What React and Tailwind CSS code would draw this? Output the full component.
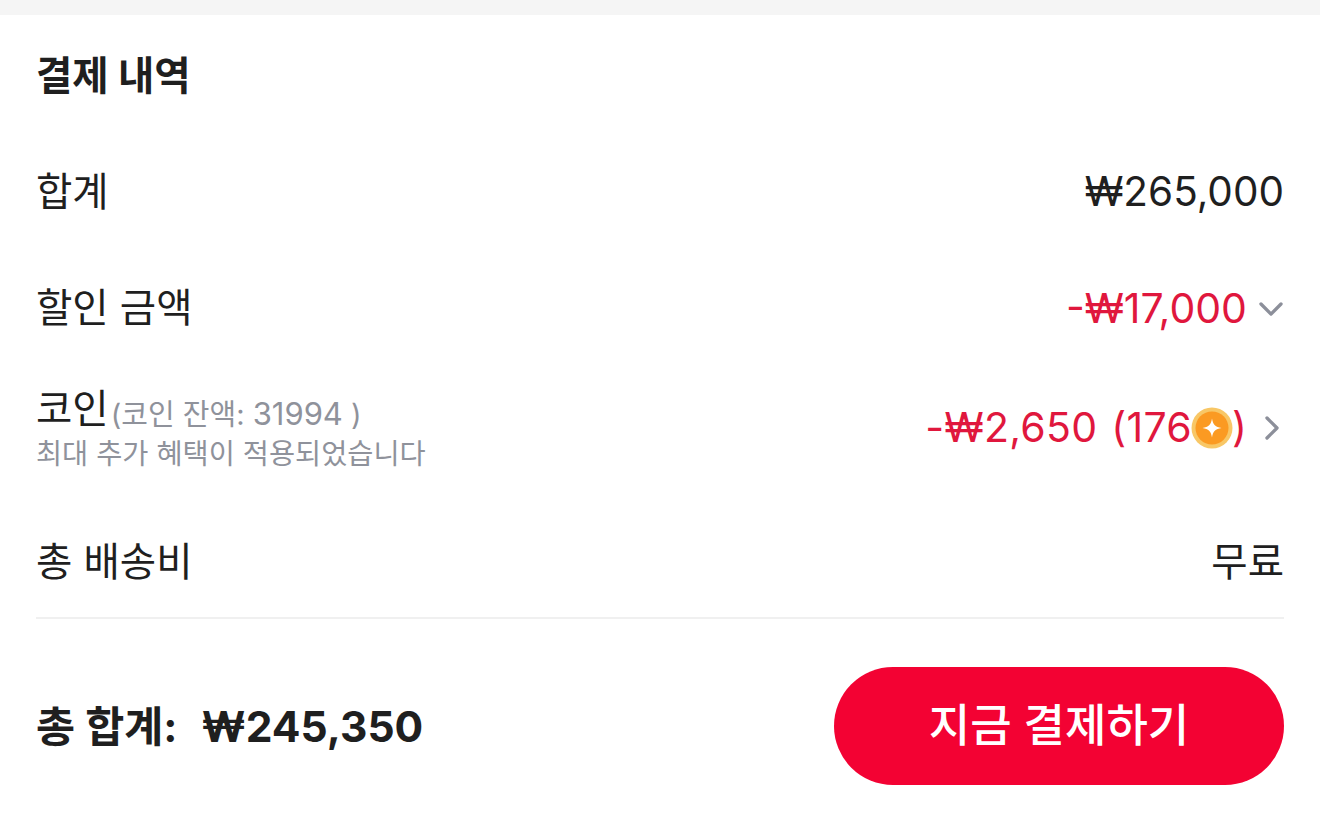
import { ChevronDown, ChevronRight } from 'lucide-react';

const font = "font-['Inter','Noto_Sans_CJK_KR',sans-serif]";

function Coin() {
  return (
    <svg className="w-[42px] h-[42px] shrink-0 -mx-[1px]" viewBox="0 0 42 42">
      <circle cx="21" cy="21" r="20.5" fill="#f8c766" />
      <circle cx="21" cy="21" r="16.5" fill="#fb9a22" />
      <path d="M21 11.5c.9 6 3.5 8.6 9.5 9.5-6 .9-8.6 3.5-9.5 9.5-.9-6-3.5-8.6-9.5-9.5 6-.9 8.6-3.5 9.5-9.5z" fill="#fff" />
    </svg>
  );
}

export default function App() {
  return (
    <div className={`w-[1320px] h-[822px] bg-white overflow-hidden text-[#1f1f1f] ${font}`}>
      <div className="h-[15px] bg-[#f5f5f5]"></div>

      <div className="px-9">
        <h2 className="h-[118px] pt-[32px] text-[39.5px] leading-[58px] font-bold">결제 내역</h2>

        <div className="h-[116px] pt-[3px] flex items-center justify-between">
          <span className="text-[39.5px]">합계</span>
          <span className="text-[40.5px]">₩265,000</span>
        </div>

        <div className="h-[116px] pt-[4px] flex items-center justify-between">
          <span className="text-[39.5px]">할인 금액</span>
          <div className="flex items-center gap-1 text-[#e0173d]">
            <span className="text-[41px]">-₩17,000</span>
            <ChevronDown className="w-10 h-10 text-[#8c8f9a] -mr-[7px]" strokeWidth={2} />
          </div>
        </div>

        <div className="h-[126px] flex items-center justify-between">
          <div className="pt-[6px]">
            <div className="flex items-end">
              <span className="text-[39.5px] leading-[44px]">코인</span>
              <span className="text-[29px] leading-[32px] text-[#8f929b] ml-[2px]">(코인 잔액: <span className="text-[31px]">31994</span> )</span>
            </div>
            <div className="mt-[2px] text-[28.4px] leading-[42px] text-[#8f929b]">최대 추가 혜택이 적용되었습니다</div>
          </div>
          <div className="flex items-center text-[#e0173d]">
            <span className="text-[41px] [word-spacing:2px] tracking-[0.3px]">-₩2,650 (176</span>
            <Coin />
            <span className="text-[41px]">)</span>
            <ChevronRight className="w-10 h-10 text-[#8c8f9a] ml-[5px] -mr-2" strokeWidth={2} />
          </div>
        </div>

        <div className="h-[128px] flex items-center justify-between border-b-2 border-[#f0f0f0]">
          <span className="text-[39.5px] mt-[17px]">총 배송비</span>
          <span className="text-[39.5px] mt-[17px]">무료</span>
        </div>

        <div className="h-[200px] pt-[48px] flex items-start justify-between">
          <div className="h-[118px] pt-[2px] flex items-center gap-6 text-[42.5px] font-bold">
            <span>총 합계:</span>
            <span>₩245,350</span>
          </div>
          <button className="w-[450px] h-[118px] rounded-[59px] bg-[#f30233] text-white text-[45px] font-medium">
            지금 결제하기
          </button>
        </div>
      </div>
    </div>
  );
}
